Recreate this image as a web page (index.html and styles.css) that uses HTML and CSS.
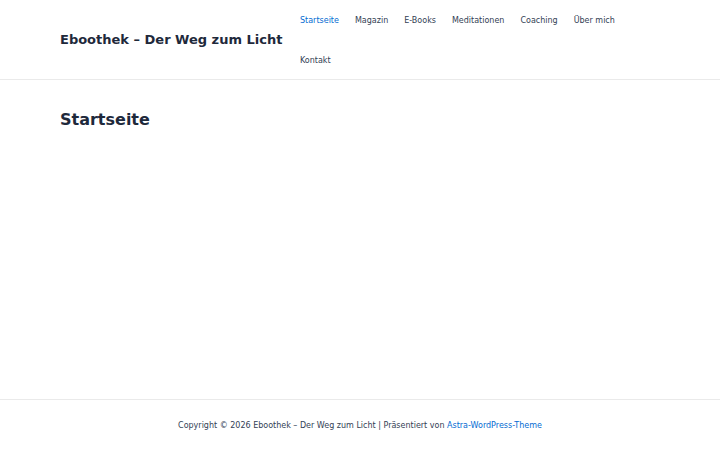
FILE: index.html
```html
<!DOCTYPE html>
<html lang="de">
<head>
<meta charset="utf-8">
<title>Startseite – Eboothek – Der Weg zum Licht</title>
<link rel="stylesheet" href="styles.css">
</head>
<body>
<header class="site-header">
  <div class="header-inner">
    <div class="branding">
      <a class="site-title" href="#">Eboothek – Der Weg zum Licht</a>
    </div>
    <nav class="main-nav">
      <ul class="menu">
        <li><a class="active" href="#">Startseite</a></li>
        <li><a href="#">Magazin</a></li>
        <li><a href="#">E-Books</a></li>
        <li><a href="#">Meditationen</a></li>
        <li><a href="#">Coaching</a></li>
        <li><a href="#">Über mich</a></li>
        <li><a href="#">Kontakt</a></li>
      </ul>
    </nav>
  </div>
</header>
<main class="site-content">
  <h1 class="page-title">Startseite</h1>
</main>
<footer class="site-footer">
  <p class="copyright">Copyright © 2026 Eboothek – Der Weg zum Licht | Präsentiert von <a href="#">Astra-WordPress-Theme</a></p>
</footer>
</body>
</html>
```
FILE: styles.css
```css
* { box-sizing: border-box; }
html, body { margin: 0; padding: 0; }
body {
  font-family: "DejaVu Sans", "Noto Sans", sans-serif;
  color: #334155;
  background: #fff;
  font-size: 8px;
}
a { text-decoration: none; color: inherit; }

.site-header {
  border-bottom: 1px solid #eaeaea;
}
.header-inner {
  display: flex;
  align-items: center;
  padding: 0 60px;
  height: 79px;
}
.branding {
  width: 240px;
  flex: 0 0 240px;
}
.site-title {
  font-size: 13px;
  font-weight: bold;
  color: #1e293b;
  white-space: nowrap;
}
.main-nav {
  flex: 1;
  align-self: flex-start;
  padding-top: 1px;
}
.menu {
  list-style: none;
  margin: 0;
  padding: 0;
  display: flex;
  flex-wrap: wrap;
}
.menu li a {
  display: block;
  line-height: 40px;
  padding-right: 16px;
  font-size: 8px;
  color: #334155;
}
.menu li a.active { color: #046bd2; }

.site-content {
  min-height: 319px;
  padding: 30px 60px 0;
}
.page-title {
  margin: 0;
  font-size: 16px;
  line-height: 19px;
  font-weight: bold;
  color: #1e293b;
}

.site-footer {
  border-top: 1px solid #eaeaea;
  height: 51px;
  display: flex;
  align-items: center;
  justify-content: center;
}
.copyright {
  margin: 0;
  font-size: 8px;
  color: #334155;
}
.copyright a { color: #046bd2; }
```
